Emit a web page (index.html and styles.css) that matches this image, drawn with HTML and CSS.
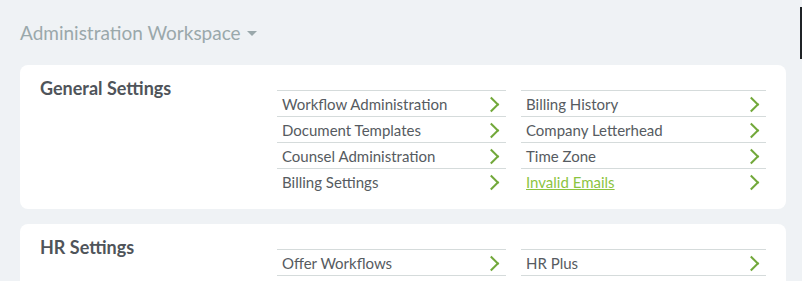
FILE: index.html
```html
<!DOCTYPE html>
<html lang="en">
<head>
    <meta charset="UTF-8">
    <title>Administration Workspace</title>
    <link rel="stylesheet" href="styles.css">
</head>
<body>
    <!-- Workspace title -->
    <h1 class="workspace-title">Administration Workspace <span class="caret"></span></h1>

    <!-- General settings -->
    <section class="card">
        <h2>General Settings</h2>
        <div class="links">
            <ul>
                <li><a href="#">Workflow Administration</a></li>
                <li><a href="#">Document Templates</a></li>
                <li><a href="#">Counsel Administration</a></li>
                <li><a href="#">Billing Settings</a></li>
            </ul>
            <ul>
                <li><a href="#">Billing History</a></li>
                <li><a href="#">Company Letterhead</a></li>
                <li><a href="#">Time Zone</a></li>
                <li><a href="#" class="active">Invalid Emails</a></li>
            </ul>
        </div>
    </section>

    <!-- HR settings (list continues below the fold) -->
    <section class="card">
        <h2>HR Settings</h2>
        <div class="links">
            <ul>
                <li><a href="#">Offer Workflows</a></li>
                <li class="more"></li>
            </ul>
            <ul>
                <li><a href="#">HR Plus</a></li>
                <li class="more"></li>
            </ul>
        </div>
    </section>

    <div class="edge"></div>
</body>
</html>
```

FILE: styles.css
```css
* {
    margin: 0;
    padding: 0;
    box-sizing: border-box;
}
body {
    background: #eff2f5;
    font-family: Lato, 'Noto Sans', sans-serif;
    color: #565b61;
    padding: 20px 16px 0 20px;
    overflow: hidden;
    height: 281px;
}
.workspace-title {
    font-size: 19px;
    font-weight: 400;
    color: #9aa8ab;
    line-height: 26px;
    margin-bottom: 19px;
}
.caret {
    display: inline-block;
    width: 0;
    height: 0;
    border-left: 5px solid transparent;
    border-right: 5px solid transparent;
    border-top: 5px solid #9aa8ab;
    vertical-align: middle;
    margin-left: 1px;
    margin-top: -3px;
}
.card {
    background: #fff;
    border-radius: 8px;
    display: flex;
    padding: 25px 20px 15px 20px;
    margin-bottom: 15px;
}
.card h2 {
    font-size: 18px;
    font-weight: 700;
    color: #4f545a;
    width: 237px;
    margin-top: -15px;
    line-height: 26px;
}
.links {
    display: flex;
    gap: 15px;
}
.links ul {
    list-style: none;
}
.links ul:first-child {
    width: 229px;
}
.links ul:last-child {
    width: 245px;
}
.links li {
    border-top: 1px solid #d5dbdb;
    height: 26px;
    display: flex;
    align-items: center;
    justify-content: space-between;
    padding: 0 9px 0 5px;
}
.links li::after {
    content: "";
    width: 9px;
    height: 9px;
    border-right: 2px solid #72a83a;
    border-bottom: 2px solid #72a83a;
    transform: rotate(-45deg);
    margin-top: 2px;
}
.links li.more::after {
    display: none;
}
.links a {
    color: #565b61;
    text-decoration: none;
    font-size: 15px;
    line-height: 25px;
    margin-top: 2px;
}
.links a.active {
    color: #8cc43f;
    text-decoration: underline;
}
.edge {
    position: absolute;
    top: 7px;
    right: 0;
    width: 2px;
    height: 52px;
    background: #1f2326;
}
```
